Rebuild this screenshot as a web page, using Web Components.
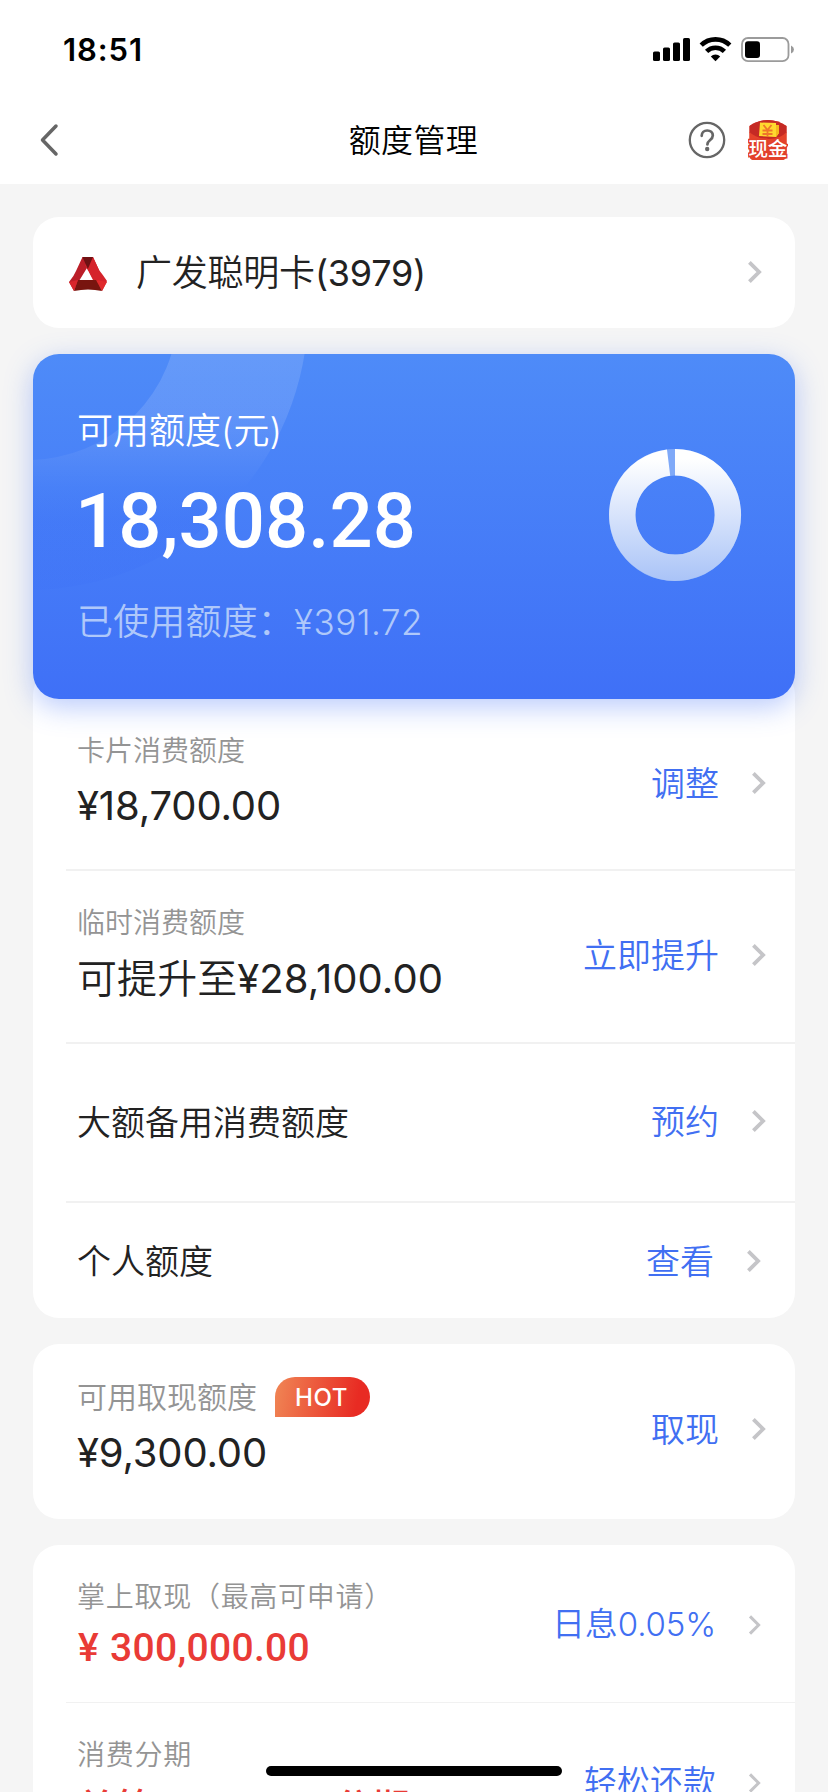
<!DOCTYPE html>
<html lang="zh-CN">
<head>
<meta charset="utf-8">
<title>额度管理</title>
<style>
html,body{margin:0;height:1792px;overflow:hidden;background:#f5f5f5}
body{font-family:Inter,"Noto Sans CJK SC",sans-serif;color:#222}
</style>
</head>
<body>
<limit-page></limit-page>
<script>
const define = (name, html, setup) => customElements.define(name, class extends HTMLElement {
  connectedCallback() {
    if (this.shadowRoot) return;
    const t = document.createElement('template');
    t.innerHTML = html;
    this.attachShadow({mode: 'open'}).append(t.content.cloneNode(true));
    if (setup) setup(this, this.shadowRoot);
  }
});

// One line of text: s = size, l = line height, w = advance width to track the letters to.
define('track-text', `<style>
:host{display:block;white-space:pre;width:max-content;flex:none}
span{display:block}
</style><span><slot></slot></span>`, (host, root) => {
  const span = root.querySelector('span');
  const s = host.getAttribute('s');
  host.style.fontSize = s + 'px';
  host.style.lineHeight = (host.getAttribute('l') || s) + 'px';
  const w = +host.getAttribute('w');
  if (w) {
    const natural = span.getBoundingClientRect().width;
    span.style.letterSpacing = (w - natural) / [...host.textContent].length + 'px';
  }
});

define('chevron-icon', `<style>
:host{display:block;flex:none;width:16px;height:24px}
svg{display:block}
</style><svg width="16" height="24" viewBox="0 0 16 24"><path fill="none" stroke="#c5c5c8" stroke-width="3.8"/></svg>`, (host, root) => {
  const p = root.querySelector('path');
  if (host.hasAttribute('small')) { p.setAttribute('d', 'M2 3.4 10.6 12 2 20.6'); p.setAttribute('stroke-width', '3'); }
  else p.setAttribute('d', 'M2.4 2.300 12.100 12 2.400 21.700');
});

define('status-bar', `<style>
:host{display:flex;height:96px;padding:4px 33px 0 63px;align-items:center;justify-content:space-between;box-sizing:border-box;background:#fff;color:#000;font-weight:600}
svg{display:block}
</style>
<track-text s="31" l="40" w="80">18:51</track-text>
<svg width="142" height="28" viewBox="0 0 142 28">
<g><rect x="0" y="15.5" width="7" height="9.5" rx="1.6"/><rect x="10" y="11.5" width="7" height="13.5" rx="1.6"/><rect x="20" y="6.5" width="7" height="18.5" rx="1.6"/><rect x="30" y="2" width="7" height="23" rx="1.6"/></g>
<g fill="none" stroke="#000" stroke-width="4.6"><path d="M48.2 9.2a20.5 20.5 0 0 1 28.6 0"/><path d="M53.6 15.4a12.6 12.6 0 0 1 17.8 0"/></g>
<path d="M57.8 20.4a6.6 6.6 0 0 1 9.4 0L62.5 25.2z"/>
<rect x="89" y="2" width="46.500" height="23.200" rx="6" fill="none" stroke="#9b9b9b" stroke-width="1.8"/>
<path d="M138 9.500q3 1.500 3 4t-3 4z" fill="#999"/><rect x="92" y="5.300" width="15" height="16.600" rx="3"/>
</svg>`);

define('cash-icon', `<style>
:host{display:block;flex:none;width:40px;height:42px}
svg{display:block}
text{font:500 19.500px "Noto Sans CJK SC",sans-serif;letter-spacing:-.4px}
</style>
<svg width="40" height="42" viewBox="0 0 40 42">
<path d="M1.500 7Q10 1 20 1T38.500 7V36q0 5-5 5H6q-4.500 0-4.500-5z" fill="#d93a27"/>
<path d="M1.500 7Q10 1 20 1T38.500 7V14Q30 21 20 21T1.500 14z" fill="#c52a24"/>
<path d="M12 3.500 28 4V6h3v8l-3 4-17-1z" fill="#ffd82e"/><path d="M28 4V6h3v8l-3 4" fill="#f5b91e"/>
<path d="M15.500 6l4 5 4-5M19.500 11v7M14.500 11.500h10M14.500 15h10" fill="none" stroke="#ef762a" stroke-width="1.800"/>
<path d="M1.500 13Q8 19.500 20 20T38.500 13V36q0 5-5 5H6q-4.500 0-4.500-5z" fill="#e5432b"/>
<text x=".6" y="37.300" fill="#fff" stroke="#e2402a" stroke-width="3" paint-order="stroke">现金</text>
</svg>`);

define('nav-bar', `<style>
:host{display:grid;grid-template-columns:1fr auto 1fr;height:88px;box-sizing:border-box;padding:0 40px 0 39px;align-items:center;background:#fff;color:#000}
.right{display:flex;justify-content:flex-end;align-items:center;gap:22px}
svg{display:block}
track-text{font-weight:350;padding-top:1px}
</style>
<svg width="22" height="34" viewBox="0 0 22 34"><path d="M17 3 3.500 17 17 31" fill="none" stroke="#666" stroke-width="3.500" stroke-linecap="round" stroke-linejoin="round"/></svg>
<track-text s="32" l="40" w="129.500">额度管理</track-text>
<div class="right">
<svg width="38" height="38" viewBox="0 0 38 38"><circle cx="19" cy="19" r="17.200" fill="none" stroke="#666" stroke-width="2.300"/><path d="M13.700 14.800c0-3.300 2.300-5.300 5.500-5.300s5.600 2 5.600 5c0 2.300-1.200 3.400-2.900 4.700-1.700 1.300-2.500 2-2.500 4.300" fill="none" stroke="#666" stroke-width="2.700" stroke-linecap="round"/><circle cx="19.200" cy="28" r="2.200" fill="#666"/></svg>
<cash-icon></cash-icon>
</div>`);

define('bank-logo', `<style>:host{display:block;flex:none;width:40px;height:36px}svg{display:block}</style>
<svg width="40" height="36" viewBox="0 0 40 36">
<path d="M14.500 1H25L31 14Q35 19 39 25L34 35 28 24Z" fill="#d5232b"/>
<path d="M14.500 1H20L22 7 11 25 6 35 1 26Q6 20 8 15Z" fill="#bb1e28"/>
<path d="M25 1 31 14 34 24H25L17 9Z" fill="#d5232b"/>
<path d="M14.500 1H25L19.800 13Z" fill="#6f1113"/>
<path d="M10 24H29L34 35Q20 32 6 35Z" fill="#78150f"/>
<path d="M28 24 39 26 34 35Z" fill="#e02a2c"/><path d="M10 24 6 35 1 26Z" fill="#d8262b"/>
<path d="M19.800 14.500 24 23.500H15.500Z" fill="#fff"/>
</svg>`);

define('account-card', `<style>
:host{display:flex;align-items:center;height:111px;box-sizing:border-box;padding:0 32px 2px 35px;border-radius:26px;background:#fff}
track-text{margin-left:28px;margin-right:auto;font-weight:350;padding-top:2px}
bank-logo{margin-top:5px}
</style><bank-logo></bank-logo><slot></slot><chevron-icon></chevron-icon>`);

define('quota-card', `<style>
:host{display:flex;position:relative;z-index:1;height:345px;box-sizing:border-box;padding:0 53px 0 44px;margin-top:26px;border-radius:26px;justify-content:space-between;
background:linear-gradient(#4e8bf8,#3f70f7);box-shadow:0 8px 28px rgba(63,112,246,.36);color:#fff}
.ring{position:absolute;left:0;top:0;border-radius:26px 0 0 26px}
.text{position:relative;display:flex;flex-direction:column;padding-top:55px}
.big{font-family:Roboto,sans-serif;font-weight:500;margin:28px 0 39px -2px}
.label{font-weight:350}
.used{font-weight:350;color:#afc8fa;display:flex}
.donut{position:relative;display:block;margin-top:94px}
</style>
<svg class="ring" width="300" height="345" viewBox="0 0 300 345">
<defs><linearGradient id="f" x1="0" y1="0" x2="0" y2="240" gradientUnits="userSpaceOnUse"><stop offset="0" stop-color="#fff" stop-opacity=".13"/><stop offset=".25" stop-color="#fff" stop-opacity=".12"/><stop offset=".56" stop-color="#fff" stop-opacity="0"/><stop offset=".56" stop-color="#3566f5" stop-opacity="0"/><stop offset=".7" stop-color="#3566f5" stop-opacity=".16"/><stop offset="1" stop-color="#3566f5" stop-opacity=".1"/></linearGradient></defs>
<path d="M-5-44m-280 0a280 280 0 1 0 560 0a280 280 0 1 0-560 0zm130 0a150 150 0 1 0 300 0a150 150 0 1 0-300 0z" fill="url(#f)" fill-rule="evenodd"/></svg>
<div class="text">
<track-text class="label" s="36" l="44" w="205">可用额度(元)</track-text>
<track-text class="big" s="76" l="80" w="341">18,308.28</track-text>
<div class="used"><track-text s="36" l="44" w="217">已使用额度：</track-text><track-text s="35" l="44" w="129">¥391.72</track-text></div>
</div>
<svg class="donut" width="134" height="134" viewBox="0 0 134 134">
<defs><linearGradient id="g" x1="0" y1="0" x2="0" y2="134" gradientUnits="userSpaceOnUse"><stop offset=".08" stop-color="#fff"/><stop offset="1" stop-color="#a9c3f7"/></linearGradient></defs>
<circle cx="67" cy="67" r="52.800" fill="none" stroke="#7fa9f8" stroke-width="26.400"/>
<path d="M67 14.200A52.800 52.800 0 1 1 60.600 14.600" fill="none" stroke="url(#g)" stroke-width="26.400"/></svg>`);

define('white-card', `<style>
:host{display:block;background:#fff;border-radius:26px;box-sizing:border-box}
</style><slot></slot>`);

// A limit row: slotted text at the left, a link and a chevron at the right.
define('limit-row', `<style>
:host{display:flex;position:relative;box-sizing:border-box;height:var(--h);padding-left:44px;padding-right:28px}
:host([line])::after{content:"";position:absolute;left:33px;right:0;bottom:0;height:var(--line,2px);background:#f1f1f1}
.left{flex:1;min-width:0;padding-top:var(--lt,0)}
.right{display:flex;align-items:center;height:40px;margin-top:var(--rt,0);color:#416ff2;font-weight:350;margin-right:var(--shift,0);gap:32px}
::slotted([slot=link]){padding-top:var(--drop,2px)}
</style><div class="left"><slot></slot></div><div class="right"><slot name="link"></slot><chevron-icon></chevron-icon></div>`, (host, root) => {
  if (host.hasAttribute('small')) root.querySelector('chevron-icon').replaceWith(Object.assign(document.createElement('div'), {innerHTML: '<chevron-icon small></chevron-icon>'}));
});

define('hot-badge', `<style>
:host{display:flex;width:95px;height:40px;border-radius:20px 20px 20px 0;background:linear-gradient(100deg,#f08655,#e82b23 85%);color:#fff;font-weight:500;justify-content:center;align-items:center;padding:1px 2px 0 0;box-sizing:border-box}
</style><track-text s="24" l="40" w="53">HOT</track-text>`);

define('limit-page', `<style>
:host{display:block;width:828px;height:1792px;overflow:hidden;position:relative;background:#f5f5f5}
main{padding:33px 33px 0;display:flex;flex-direction:column}
b{font-weight:400}
.account{margin-left:28px;margin-right:auto;padding-top:2px;font-weight:350}
.list{margin-top:-30px;padding-top:30px}
.gap{margin-top:26px}
.cap{color:#949494;font-weight:350}
.val{font-weight:400;margin-top:12px}
.name{font-weight:350}
.head{display:flex;align-items:center;gap:18px}
.red{color:#e93b36;font-family:Roboto,"Noto Sans CJK SC",sans-serif;font-weight:500;display:flex;margin:9px 0 0 1px}
.home{position:absolute;left:266px;top:1766px;width:296px;height:10px;border-radius:5px;background:#000}
</style>
<status-bar></status-bar><nav-bar></nav-bar>
<main>
<account-card><track-text class="account" s="36" l="44" w="290">广发聪明卡<b>(3979)</b></track-text></account-card>
<quota-card></quota-card>
<white-card class="list">
<limit-row line style="--h:172px;--lt:34px;--rt:64px"><track-text class="cap" s="28" l="36" w="168">卡片消费额度</track-text><track-text class="val" s="40" l="50" w="204">¥18,700.00</track-text><track-text slot="link" s="34" l="40">调整</track-text></limit-row>
<limit-row line style="--h:173px;--lt:34px;--rt:64px"><track-text class="cap" s="28" l="36" w="168">临时消费额度</track-text><track-text class="val" style="margin-top:13px;font-weight:350" s="40" l="50" w="366">可提升至<b>¥28,100.00</b></track-text><track-text slot="link" s="34" l="40">立即提升</track-text></limit-row>
<limit-row line style="--h:159px;--lt:59px;--rt:57px"><track-text class="name" s="34" l="40">大额备用消费额度</track-text><track-text slot="link" s="34" l="40">预约</track-text></limit-row>
<limit-row style="--h:115px;--lt:39px;--rt:38px;--shift:5px"><track-text class="name" s="34" l="40">个人额度</track-text><track-text slot="link" s="34" l="40">查看</track-text></limit-row>
</white-card>
<white-card class="gap">
<limit-row style="--h:175px;--lt:33px;--rt:65px"><div class="head"><track-text class="cap" s="30" l="40" w="180">可用取现额度</track-text><hot-badge></hot-badge></div><track-text class="val" style="margin-top:11px" s="40" l="50" w="190">¥9,300.00</track-text><track-text slot="link" s="34" l="40">取现</track-text></limit-row>
</white-card>
<white-card class="gap">
<limit-row small line style="--h:158px;--lt:34px;--rt:60px;--line:1px;--shift:3px;--drop:0px"><track-text class="cap" s="28" l="36" w="316">掌上取现（最高可申请）</track-text><div class="red"><track-text s="39" l="48" w="32">¥</track-text><track-text s="39" l="48" w="200">300,000.00</track-text></div><track-text slot="link" s="33" l="40" w="164" style="margin-top:-3px">日息0.05%</track-text></limit-row>
<limit-row small style="--h:158px;--lt:34px;--rt:60px;--shift:3px;--drop:0px"><track-text class="cap" s="28" l="36" w="115">消费分期</track-text><div class="red" style="margin:11px 0 0"><track-text s="38" l="48" w="124">单笔 ≥ </track-text><track-text s="38" l="48" w="133">100元 </track-text><track-text s="38" l="48">分期</track-text></div><track-text slot="link" s="33" l="40" w="132" style="margin-top:-3px">轻松还款</track-text></limit-row>
</white-card>
</main>
<div class="home"></div>`);
</script>
</body>
</html>
